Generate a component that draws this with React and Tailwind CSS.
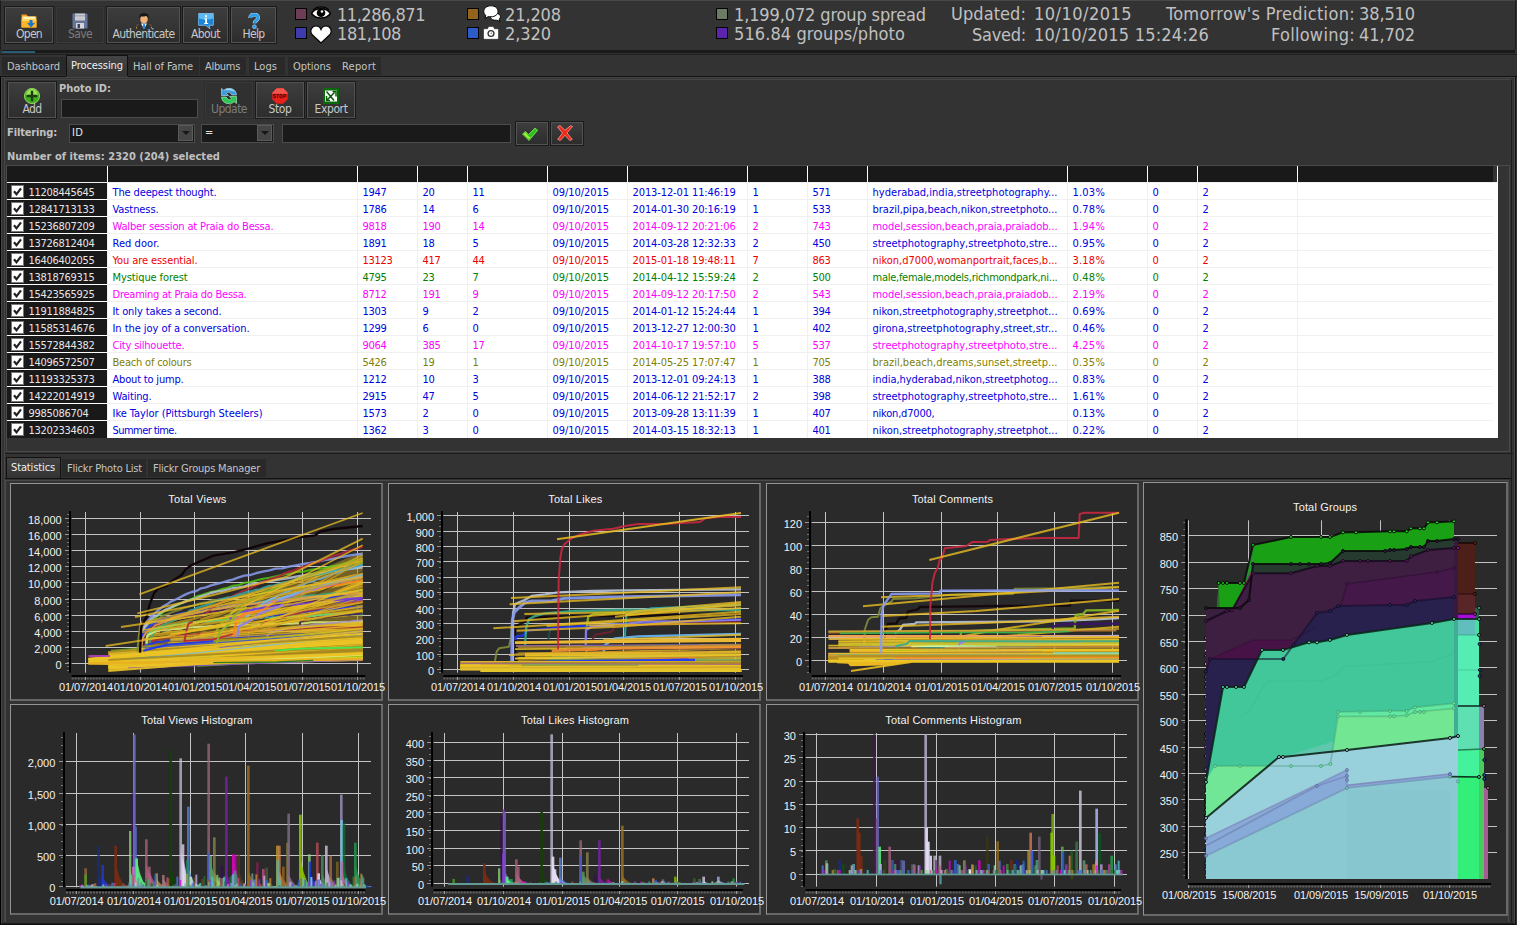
import React, { useLayoutEffect, useRef, useState } from 'react';

/* Text whose letter spacing is adjusted so that it takes a given width. */
function Fit({ w, className = '', children }) {
  const ref = useRef(null);
  const [ls, setLs] = useState(null);
  useLayoutEffect(() => {
    const nat = ref.current.getBoundingClientRect().width;
    setLs((w - nat) / String(children).length);
  }, []);
  return (
    <span ref={ref} className={'inline-block whitespace-pre ' + className} style={ls === null ? undefined : { letterSpacing: ls + 'px' }}>
      {children}
    </span>
  );
}

/* ---------- icons ---------- */
const Svg = ({ children, w = 16, h = 16, vb = '0 0 16 16' }) => (
  <svg width={w} height={h} viewBox={vb} className="block shrink-0">{children}</svg>
);
const FolderIcon = () => (
  <Svg>
    <path d="M0.5 1.5h5l1.5 2h8.5v11h-15z" fill="#f79a1c" />
    <path d="M1.5 3.5h13v3h-13z" fill="#fff3b0" />
    <path d="M0.5 6h15v8.500h-15z" fill="#fdb52c" />
    <path d="M1 6h14v2H1z" fill="#ffd560" />
    <path d="M8.500 7h3v3h2.500l-4 4.500-4-4.500h2.500z" fill="#1b77c5" />
  </Svg>
);
const SaveIcon = () => (
  <Svg>
    <path d="M0.500 0.500h14l1 1v14h-14l-1-1z" fill="#64749a" />
    <path d="M3 0.500h10v7h-10z" fill="#c9c9cf" />
    <path d="M3 2h10v1.500h-10z" fill="#a9aab4" />
    <path d="M4 10h8v5.500h-8z" fill="#d5d5d9" />
    <path d="M5.500 11h2.500v4h-2.500z" fill="#3c4660" />
  </Svg>
);
const ManIcon = () => (
  <Svg>
    <path d="M0.500 16c0-4 2-5 4-5.500h7c2 .5 4 1.500 4 5.500z" fill="#2e3136" />
    <path d="M0.500 15.500c0-3 1-4 2.500-4.500M15.500 15.500c0-3-1-4-2.500-4.500" stroke="#d98b3a" strokeWidth="1" fill="none" strokeDasharray="1.500 1.500" />
    <path d="M5 10.500h6l-3 5.500z" fill="#fff" />
    <path d="M7.300 10.500h1.500l.7 4-1.500 1.500-1.400-1.500z" fill="#2a8ae0" />
    <ellipse cx="8" cy="6" rx="3.700" ry="4.400" fill="#f1b27a" />
    <path d="M3.500 6C3 2 4 .3 8 .3S13 2 12.500 6c-.8-2-1.500-2.700-2.500-3-2 .8-4.500.5-5 .5-.7.500-1 1.500-1.500 2.500z" fill="#15171c" />
  </Svg>
);
const AboutIcon = () => (
  <Svg>
    <path d="M1 0.500h14q.8 0 .8.800v10.200q0 .8-.8.800h-4l1 3.500-4.500-3.500h-6.500q-.8 0-.8-.8V1.300q0-.8.8-.8z" fill="#1b86d8" stroke="#9cd3fa" strokeWidth=".7" />
    <path d="M1 1h14v4.500q-7 2-14 0z" fill="#5db9f3" />
    <path d="M6.500 5.200h2.500v4.800h1.200v1h-4v-1h1v-3.800h-1z M7 2.200h2v2h-2z" fill="#fff" />
  </Svg>
);
const HelpIcon = () => (
  <Svg>
    <path d="M4.200 5C4.200 2.500 5.800 1.700 8 1.700s4 1.100 4 3.200c0 2.400-3.500 2.800-3.500 5.300" fill="none" stroke="#bfe4ff" strokeWidth="3.800" />
    <path d="M4.200 5C4.200 2.500 5.800 1.700 8 1.700s4 1.100 4 3.200c0 2.400-3.500 2.800-3.500 5.300" fill="none" stroke="#2c9be8" strokeWidth="2.900" />
    <circle cx="8.400" cy="13.700" r="2" fill="#2c9be8" stroke="#bfe4ff" strokeWidth=".5" />
  </Svg>
);
const AddIcon = () => (
  <Svg>
    <circle cx="8" cy="8" r="7.600" fill="#3fae1e" stroke="#a8e66e" strokeWidth=".8" />
    <path d="M2 7a6 6 0 0 1 12 0q-6 2.500-12 0z" fill="#9be256" />
    <path d="M8 2.700v10.600M2.700 8h10.600" stroke="#1d3d12" strokeWidth="2.400" />
  </Svg>
);
const UpdateIcon = () => (
  <Svg>
    <path d="M0.500 0.500v7h7l-2.200-2.200c2-1.600 4-1.300 5.500 1.700h4.700C15 0 7-1.500 2.800 2.300z" fill="#3f9bd8" stroke="#b9e3fb" strokeWidth=".6" />
    <path d="M3 2.500C7-.8 12 .5 14 4c-3-1.500-7-2-11-1.500z" fill="#9bd6f6" />
    <path d="M15.500 15.500v-7h-7l2.200 2.200c-2 1.600-4 1.300-5.500-1.700H.5C1 16 9 17.500 13.200 13.700z" fill="#2cc757" stroke="#b4f5c0" strokeWidth=".6" />
  </Svg>
);
const StopIcon = () => (
  <Svg>
    <path d="M4.700 0.300h6.600l4.400 4.400v6.600l-4.400 4.400H4.700L.3 11.300V4.700z" fill="#e8201a" />
    <path d="M4.700 0.300h6.600l4.400 4.400v1H.3v-1z" fill="#f0564c" />
    <path d="M3.800 6.500H1.700v1.500h1.800v1.600H1.500M4.500 6.500h2.500M5.700 6.500v3.500M8 6.500h2v3.200h-2zM11.800 10V6.500h2v1.800h-2" stroke="#5d0b08" strokeWidth="1" fill="none" />
  </Svg>
);
const ExportIcon = () => (
  <Svg>
    <rect width="16" height="16" fill="#0a6a0a" />
    <rect x="2" y="2.500" width="12" height="11" fill="#fff" />
    <path d="M3.500 3.500l7.500 9M11.500 4.500l-8 8M9.500 3.500h3.500v5M3.500 8v4.500h3.500" stroke="#0a5a0a" strokeWidth="1.500" fill="none" />
  </Svg>
);
const CheckIcon = () => (
  <Svg>
    <path d="M0.500 9l3-2.500 3 3L13 3l2.700 2.300L7 15.500z" fill="#2fc41c" stroke="#8ff06e" strokeWidth=".7" />
    <path d="M1.500 9l2-1.500 3 4 2 .5L7 14z" fill="#a8f52a" />
  </Svg>
);
const CrossIcon = () => (
  <Svg>
    <path d="M0.500 2L3 .5l5 4.800L13.500.7l2 .8L10 8l5.300 6.300-2.500 1.300L8 10.300 3.300 15.500.700 14.300 5.500 8z" fill="#ee2a1c" stroke="#ffb0a4" strokeWidth=".7" />
  </Svg>
);
const EyeIcon = () => (
  <Svg w={20} h={14} vb="0 0 20 14">
    <path d="M.5 7.500C4 1.500 15 1 19.500 7.500 15 13.500 5 13.500.500 7.500z" fill="#fff" stroke="#050505" strokeWidth="1.600" />
    <circle cx="10" cy="6.800" r="4.300" fill="#050505" />
    <circle cx="11" cy="5.500" r="1.300" fill="#fff" />
    <path d="M2 4C6-.2 14-.2 18 4" stroke="#050505" strokeWidth="1.300" fill="none" />
  </Svg>
);
const HeartIcon = () => (
  <Svg w={22} h={19} vb="0 0 22 19">
    <path d="M11 18L2 9.500C-.5 6 1.500 1 5.800 1 8.500 1 10.300 2.700 11 4.500 11.700 2.700 13.500 1 16.200 1c4.300 0 6.300 5 3.800 8.500z" fill="#fff" stroke="#080808" strokeWidth="1.200" />
  </Svg>
);
const CommentsIcon = () => (
  <Svg w={18} h={17} vb="0 0 18 17">
    <path d="M9 9c3-1 7-1 8.300 1.700.5 1.700-.3 2.800-1.300 3.600l1 2.200-3.500-1.300c-3 .3-5.500-.7-6-2.700z" fill="#fff" stroke="#080808" strokeWidth="1" />
    <path d="M8 .8c4.200 0 7 2.400 7 5.500s-2.800 5.500-7 5.500c-1 0-1.800-.1-2.600-.3L2 13.500l.8-3C1.400 9.400.8 8 .8 6.300.8 3.200 3.800.8 8 .8z" fill="#fff" stroke="#080808" strokeWidth="1" />
  </Svg>
);
const CameraIcon = () => (
  <Svg w={16} h={14} vb="0 0 16 14">
    <path d="M1.500 2.800h3l1.200-2.300h4.600l1.200 2.300h3q1 0 1 1v8.500q0 1-1 1h-13q-1 0-1-1V3.800q0-1 1-1z" fill="#fff" stroke="#111" strokeWidth=".5" />
    <circle cx="8" cy="7.500" r="3.600" fill="#333" />
    <circle cx="8" cy="7.500" r="2.200" fill="#fff" />
    <circle cx="8.300" cy="7.300" r=".8" fill="#777" />
  </Svg>
);

/* ---------- small widgets ---------- */
function ToolButton({ icon, label, lw, className, disabled }) {
  return (
    <div className={'h-[38px] shrink-0 border ' + (disabled ? 'border-[#2c2c2c] ' : 'border-[#1a1a1a] ') + className}>
      <div className={'h-full flex flex-col items-center border pt-[5px] ' + (disabled ? 'border-[#383838] bg-[#303030] text-[#7c7c7c]' : 'border-[#525252] bg-linear-to-b from-[#3d3d3d] to-[#2d2d2d] text-[#c8c8c8]')}>
        {icon}
        <Fit w={lw} className="text-[12px] leading-[12px] -mt-px">{label}</Fit>
      </div>
    </div>
  );
}
const Swatch = ({ className }) => <div className={'size-[12px] border border-black ' + className} />;
const Field = ({ className, children }) => (
  <div className={'h-[19px] shrink-0 border border-[#4c4c4c] bg-[#1a1a1a] flex items-center ' + className}>{children}</div>
);
const DropArrow = () => (
  <div className="w-[15px] h-[16px] bg-[#454545] border border-[#5a5a5a] flex items-center justify-center ml-auto mr-px">
    <svg width="8" height="4" viewBox="0 0 8 4"><path d="M0 0h8L4 4z" fill="#171717" /></svg>
  </div>
);
function Tab({ label, w, className, active }) {
  return (
    <div className={'flex shrink-0 text-[11px] leading-[19px] ' + (active ? 'h-[21px] border border-b-0 border-[#111] bg-linear-to-b from-[#444] to-[#343434] text-[#f0f0f0] pl-[4px] ' : 'h-[18px] bg-[#292929] text-[#c4c4c4] pl-[5px] ') + className}>
      <Fit w={w}>{label}</Fit>
    </div>
  );
}

/* ---------- table ---------- */
const COLORS = { b: 'text-[#0000e0]', m: 'text-[#ff00ff]', r: 'text-[#ee0000]', g: 'text-[#008000]', o: 'text-[#808000]' };
const ROWS = [
  ['b', '11208445645', 'The deepest thought.', 104, '1947', '20', '11', '2013-12-01 11:46:19', '1', '571', 'hyderabad,india,streetphotography...', '1.03%'],
  ['b', '12841713133', 'Vastness.', 46, '1786', '14', '6', '2014-01-30 20:16:19', '1', '533', 'brazil,pipa,beach,nikon,streetphoto...', '0.78%'],
  ['m', '15236807209', 'Walber session at Praia do Bessa.', 161, '9818', '190', '14', '2014-09-12 20:21:06', '2', '743', 'model,session,beach,praia,praiadob...', '1.94%'],
  ['b', '13726812404', 'Red door.', 47, '1891', '18', '5', '2014-03-28 12:32:33', '2', '450', 'streetphotography,streetphoto,stre...', '0.95%'],
  ['r', '16406402055', 'You are essential.', 85, '13123', '417', '44', '2015-01-18 19:48:11', '7', '863', 'nikon,d7000,womanportrait,faces,b...', '3.18%'],
  ['g', '13818769315', 'Mystique forest', 75, '4795', '23', '7', '2014-04-12 15:59:24', '2', '500', 'male,female,models,richmondpark,ni...', '0.48%'],
  ['m', '15423565925', 'Dreaming at Praia do Bessa.', 134, '8712', '191', '9', '2014-09-12 20:17:50', '2', '543', 'model,session,beach,praia,praiadob...', '2.19%'],
  ['b', '11911884825', 'It only takes a second.', 109, '1303', '9', '2', '2014-01-12 15:24:44', '1', '394', 'nikon,streetphotography,streetphot...', '0.69%'],
  ['b', '11585314676', 'In the joy of a conversation.', 137, '1299', '6', '0', '2013-12-27 12:00:30', '1', '402', 'girona,streetphotography,street,str...', '0.46%'],
  ['m', '15572844382', 'City silhouette.', 72, '9064', '385', '17', '2014-10-17 19:57:10', '5', '537', 'streetphotography,streetphoto,stre...', '4.25%'],
  ['o', '14096572507', 'Beach of colours', 79, '5426', '19', '1', '2014-05-25 17:07:47', '1', '705', 'brazil,beach,dreams,sunset,streetp...', '0.35%'],
  ['b', '11193325373', 'About to jump.', 71, '1212', '10', '3', '2013-12-01 09:24:13', '1', '388', 'india,hyderabad,nikon,streetphotog...', '0.83%'],
  ['b', '14222014919', 'Waiting.', 39, '2915', '47', '5', '2014-06-12 21:52:17', '2', '398', 'streetphotography,streetphoto,stre...', '1.61%'],
  ['b', '9985086704', 'Ike Taylor (Pittsburgh Steelers)', 150, '1573', '2', '0', '2013-09-28 13:11:39', '1', '407', 'nikon,d7000,', '0.13%'],
  ['b', '13202334603', 'Summer time.', 64, '1362', '3', '0', '2014-03-15 18:32:13', '1', '401', 'nikon,streetphotography,streetphot...', '0.22%'],
];
const COLW = ['w-[250px]', 'w-[60px]', 'w-[50px]', 'w-[80px]', 'w-[80px]', 'w-[120px]', 'w-[60px]', 'w-[60px]', 'w-[200px]', 'w-[80px]', 'w-[50px]', 'w-[100px]', 'w-[196px]'];
const digits = (s) => [...s].reduce((a, c) => a + (c === ' ' || c === ':' ? 3.7 : c === '-' ? 4 : c === '/' ? 4.3 : c === '%' ? 10.500 : c === '.' ? 4 : 6), 0);

function Table() {
  return (
    <div className="w-[1491px] text-[11px]">
      <div className="flex h-[16px] bg-[#191919]">
        <div className="w-[100px]" />
        {COLW.map((c, i) => <div key={i} className={c + ' border-l border-white shrink-0'} />)}
        <div className="w-[4px] bg-[#333]" />
        <div className="w-px bg-white" />
      </div>
      <div className="h-px bg-[#f0f0f0]" />
      {ROWS.map((r, n) => {
        const last = n === ROWS.length - 1;
        const cells = [r[2], r[4], r[5], r[6], '09/10/2015', r[7], r[8], r[9], r[10], r[11], '0', '2', ''];
        const tagW = r[10].length < 20 ? 62 : 185;
        return (
          <div key={n} className="flex h-[17px] bg-white">
            <div className={'w-[100px] shrink-0 bg-[#191919] flex pl-[4px] pt-[2px] text-[#e6e6e6] ' + (last ? '' : 'border-b border-white')}>
              <svg width="13" height="13" viewBox="0 0 13 13" className="block shrink-0">
                <rect x=".5" y=".5" width="12" height="12" fill="#fff" stroke="#777" />
                <path d="M3 6.300l2.500 3L10 3.300" fill="none" stroke="#222" strokeWidth="2.200" />
              </svg>
              <Fit w={r[1].length * 6} className="ml-[4.500px] leading-[16px]">{r[1]}</Fit>
            </div>
            {cells.map((c, i) => (
              <div key={i} className={COLW[i] + ' shrink-0 border-l border-[#f0f0f0] pl-[4.500px] leading-[20px] h-[17px] ' + COLORS[r[0]] + (last ? '' : ' border-b')}>
                {c && <Fit w={i === 0 ? r[3] : i === 8 ? tagW : digits(c)}>{c}</Fit>}
              </div>
            ))}
          </div>
        );
      })}
    </div>
  );
}

/* ---------- charts ---------- */
/* Chart geometry is kept at three units to the pixel, from an origin ox, oy. */
const snap = (z) => Math.floor(z / 3) + 0.5;
const DATES = ['01/07/2014', '01/10/2014', '01/01/2015', '01/04/2015', '01/07/2015', '01/10/2015'];
const GOLD = '#e9bd22';
const PAL = ['#8a9cf0', '#4fc80f', '#b9c4d8', '#7f8a3a', '#1a32ff', '#37a88a', '#3c1458', '#f0a050', '#55d880', '#d8f080', '#ff8020', '#9080f0', '#b02838', '#6ab8f8', '#a890b8', '#6a3ae0', '#88b820', '#30a8a8'];
const HPAL = ['#e000e0', '#58a078', '#3068e0', '#88d870', '#c89030', '#a06030', '#8040c0', '#d0b8e8', '#a0e0c0', '#605020', '#207030', '#c05078', '#50c8d8', '#5878e8', '#7a9ea0'];

function rng(seed) {
  let a = seed;
  return () => {
    a = (a + 0x6d2b79f5) | 0;
    let t = Math.imul(a ^ (a >>> 15), 1 | a);
    t = (t + Math.imul(t ^ (t >>> 7), 61 | t)) ^ t;
    return ((t ^ (t >>> 14)) >>> 0) / 4294967296;
  };
}

function Chart({ x, y, w, h, ox, oy, title, tx, ty, tw, xs, ys, left, right, top, bottom, ax, ay, axEnd, lx, ylx, labelY, dates = DATES, minor = 3, className, children }) {
  const step = (ys[1][1] - ys[0][1]) / minor;
  const minors = [];
  for (let v = ys[0][1] - step; v > top; v -= step) minors.push(v);
  for (let v = ys[0][1] + step; v < bottom; v += step) minors.push(v);
  return (
    <div className={'shrink-0 bg-[#2a2a2a] border-l border-t border-r-2 border-b-2 border-l-[#949494] border-t-[#949494] border-r-[#686868] border-b-[#686868] ' + className}>
      <svg width={w - 3} height={h - 3} viewBox={`${x + 1 - ox} ${y + 1 - oy} ${w - 3} ${h - 3}`} className="block overflow-visible">
        {ys.map(([, v], i) => <line key={i} x1={left / 3} x2={right / 3} y1={snap(v)} y2={snap(v)} stroke="#c3c3c3" />)}
        {xs.map((v, i) => <line key={i} y1={top / 3} y2={bottom / 3} x1={snap(v)} x2={snap(v)} stroke="#c3c3c3" />)}
        {minors.map((v, i) => <line key={i} x1={ax / 3 - 3} x2={ax / 3 - 1} y1={snap(v)} y2={snap(v)} stroke="#777" />)}
        {ys.map(([, v], i) => <line key={i} x1={ax / 3 - 5} x2={ax / 3 - 1} y1={snap(v)} y2={snap(v)} stroke="#999" />)}
        <line x1={ax / 3} x2={ax / 3} y1={top / 3 - 1} y2={bottom / 3} stroke="#000" strokeWidth="2" />
        <line x1={left / 3} x2={axEnd / 3} y1={ay / 3} y2={ay / 3} stroke="#000" strokeWidth="2" />
        <line x1={left / 3} x2={axEnd / 3} y1={ay / 3 + 2.500} y2={ay / 3 + 2.500} stroke="#636363" strokeWidth="2" strokeDasharray="2 1" />
        {xs.map((v, i) => <line key={i} y1={ay / 3 + 1} y2={ay / 3 + 4} x1={snap(v)} x2={snap(v)} stroke="#999" />)}
        <g transform="scale(0.333333)">{children}</g>
        <g fill="#f2f2f2" fontSize="11" fontFamily='"Liberation Sans", Arial, sans-serif'>
          <text x={tx / 3} y={ty / 3} textLength={tw}>{title}</text>
          {ys.map(([l, v], i) => <text key={i} x={ylx / 3} y={v / 3 + 5.300} textAnchor="end">{l}</text>)}
          {dates.map((l, i) => <text key={i} x={lx[i] / 3} y={labelY / 3} textLength="54">{l}</text>)}
        </g>
      </svg>
    </div>
  );
}

const P = ({ d, c, o = 0.900, w = 6 }) => <polyline points={d} fill="none" stroke={c} strokeOpacity={o} strokeWidth={w} strokeLinejoin="round" />;

function growth(r, x0, y0, x1, y1, p) {
  const pts = [];
  let prev = y0;
  const n = 45;
  for (let i = 0; i <= n; i++) {
    const t = i / n;
    const tt = Math.pow(t, 1.6);
    let v = y0 + (y1 - y0) * Math.pow(tt, p) + (r() - 0.5) * 3;
    if (i === n) v = y1;
    v = Math.min(prev, v);
    prev = v;
    pts.push((x0 + (x1 - x0) * tt).toFixed(0) + ',' + v.toFixed(0));
  }
  return pts.join(' ');
}

function ViewsLines() {
  const r = rng(11);
  const out = [];
  const over = [];
  const curves = [
    [421, 515, 222, .34, '#8a9cf0'], [423, 515, 245, .36, '#4fc80f'], [421, 512, 262, .33, '#b9c4d8'], [424, 515, 300, .3, '#7f8a3a'],
    [424, 515, 345, .24, '#1a32ff'], [450, 505, 332, .33, '#37a88a'], [430, 515, 355, .25, '#3c1458'], [424, 515, 338, .3, '#f0a050'],
    [440, 500, 402, .2, '#55d880'], [440, 490, 425, .2, '#d8f080'], [455, 490, 440, .4, '#b02838'], [430, 510, 458, .3, '#1a32ff'],
    [645, 480, 235, .5, '#88b820'], [700, 470, 300, .4, '#ff8020'], [650, 490, 290, .5, '#9080f0'], [710, 470, 255, .5, '#6ab8f8'],
    [620, 400, 200, .75, '#b02838'], [780, 400, 285, .6, '#6ab8f8'], [690, 430, 360, .3, '#6a3ae0'], [900, 435, 402, .3, '#3c1458'],
    [760, 420, 380, .6, '#1a32ff'], [800, 470, 420, .5, '#a890b8'], [560, 400, 252, .8, '#30a8a8'], [780, 440, 365, .6, '#b02838'],
  ];
  /* broad translucent wash under the dense fan of trend lines */
  out.push(<polygon key="w1" points="421,455 620,400 860,310 1088,215 1088,470 421,520" fill="#b08e20" fillOpacity=".55" />);
  out.push(<polygon key="w2" points="325,515 421,505 800,470 1088,420 1088,543 640,552 325,573" fill="#e6c02a" fillOpacity=".9" />);
  out.push(<polygon key="w3" points="265,533 330,530 330,555 265,553" fill="#e6c02a" />);
  for (let i = 0; i < 34; i++) {
    const f = r();
    const x0 = 421 + Math.floor(r() * 5) * (r() < 0.3 ? 0 : 82);
    const t = (x0 - 421) / 667;
    const y1 = 200 + f * 265;
    const y0 = Math.min(510, 410 + f * 80 + t * 25 * r());
    out.push(<line key={'g' + i} x1={x0} y1={y0} x2={1088} y2={y1} stroke={i % 3 ? '#d6ac22' : '#a8861f'} strokeOpacity=".85" strokeWidth="5" />);
  }
  for (let i = 0; i < 12; i++) {
    const f = r();
    const x0 = 480 + Math.floor(r() * 6) * 70;
    out.push(<line key={'n' + i} x1={x0} y1={455 - (x0 - 480) * 0.1 + f * 30} x2={1088} y2={240 + f * 220} stroke="#3a3420" strokeOpacity=".7" strokeWidth="4" />);
  }
  curves.forEach(([x0, y0, y1, p, c], i) => over.push(<P key={'c' + i} d={growth(r, x0, y0, 1088, y1, p)} c={c} w={i % 2 ? 6 : 7} o={0.85} />));
  for (let i = 0; i < 26; i++) {
    const f = r();
    const x0 = 421 + Math.floor(r() * 5) * 90;
    over.push(<line key={'h' + i} x1={x0} y1={400 + f * 90} x2={1088} y2={195 + f * 270} stroke={i % 2 ? GOLD : '#cda224'} strokeOpacity=".8" strokeWidth="4.500" />);
  }
  for (let i = 0; i < 58; i++) {
    const f = r();
    const x0 = [325, 325, 421, 421, 265, 540, 640][Math.floor(r() * 7)];
    const early = x0 === 265;
    const y0 = early ? 535 + f * 17 : 505 + f * 60 - (x0 > 325 ? 10 : 0);
    const y1 = 440 + f * 100;
    const hue = i % 4 === 2;
    over.push(<line key={'b' + i} x1={hue ? x0 + r() * 400 : x0} y1={y0} x2={1088} y2={y1} stroke={hue ? PAL[Math.floor(r() * PAL.length)] : i % 4 === 3 ? '#a8881f' : '#ecc424'} strokeOpacity={hue ? 0.7 : 0.85} strokeWidth={hue ? 4 : 6} />);
  }
  return (
    <g>
      {out}
      {over}
      <P d="265,528 330,528" c="#b040c0" />
      <P d="265,550 640,545 1088,537" c="#e8b020" w={8} />
      <P d="325,573 640,548" c={GOLD} w={6} />
      <P d="640,548 830,546 940,541" c="#207820" w={4} />
      <P d="825,512 900,506 1088,502" c="#40f050" w={5} />
      <P d="553,485 560,450 566,430 578,426" c="#b02838" />
      <P d="553,483 640,478 700,462" c="#c02030" w={5} />
      <P d="430,512 500,494 640,484" c="#1a32ff" />
      <P d="650,490 660,455 690,430 705,405 740,380" c="#88b820" />
      <P d="700,470 710,420 730,402 790,390 830,360" c="#ff8020" />
      <P d="712,470 716,440 745,425 780,400 850,375" c="#9080f0" w={7} />
      <P d="1000,360 1088,354" c="#6a3ae0" w={7} />
      <P d="412,515 416,470 421,430" c="#7f8a3a" />
      <P d="420,518 424,440 440,410 450,370 462,340 475,325 500,318 518,302 545,285 557,268 575,255 610,240 640,227 700,217 745,206 800,190 850,181 890,173 945,166 960,155 1000,147 1088,138" c="#120509" o={1} w={7} />
      <P d="418,343 1088,99" c={GOLD} o={0.75} w={5.500} />
      <P d="412,400 640,345 860,290 1088,176" c={GOLD} o={0.750} w={5.500} />
      <P d="405,411 640,365 1088,290" c={GOLD} o={0.750} w={5.500} />
      <P d="363,441 640,400 1088,330" c={GOLD} o={0.750} w={5.500} />
      <P d="317,498 500,470 1088,340" c={GOLD} o={0.750} w={5.500} />
    </g>
  );
}

function flatLines(r, n, x0s, ya, yb, rise) {
  const out = [];
  for (let i = 0; i < n; i++) {
    const y0 = ya + (yb - ya) * r();
    const hue = i % 2 === 1;
    const x0 = x0s[Math.floor(r() * x0s.length)] + (hue ? r() * 250 : 0);
    const c = hue ? PAL[Math.floor(r() * PAL.length)] : i % 4 === 2 ? '#b08a24' : '#ecc424';
    out.push(<line key={ya + '-' + i} x1={x0} y1={y0} x2={hue && r() < 0.5 ? x0 + 350 : 1068} y2={y0 - rise * r()} stroke={c} strokeOpacity={hue ? 0.7 : 0.85} strokeWidth={hue ? 3.500 : 5} />);
  }
  return out;
}

function LikesLines() {
  const r = rng(5);
  const T = (d, i) => <P key={i} d={d} c={GOLD} o={0.780} w={6} />;
  return (
    <g>
      <P d="330,543 335,515 342,505 372,500 378,470 380,440 386,400" c="#7f8a3a" />
      <P d="390,548 390,440 405,432 420,426 425,412 520,410 640,408 900,405 1068,402" c="#120509" w={7} />
      <P d="392,480 392,470 415,466 425,452 520,443 600,438 1068,418" c="#1a32ff" w={7} />
      <P d="420,495 424,440 432,418 450,408 480,400 570,393 700,390 1068,390" c="#37a88a" w={7} />
      <P d="384,548 384,400 390,372 415,362 440,348 480,343 520,337 620,333 720,331 1068,328" c="#b9c4d8" w={7} />
      <P d="380,552 382,420 388,397 400,385 420,368 440,363 500,362 540,355 650,352 1068,344" c="#8a9cf0" w={9} />
      <P d="602,500 603,450 620,440 700,435 780,424 960,425 1068,420" c="#9080f0" w={7} />
      <P d="605,440 610,410 625,402 720,398" c="#88b820" w={7} />
      <P d="623,478 630,464 680,455 690,438 1068,425" c="#702030" />
      <P d="720,468 724,403 800,385 1068,374" c="#30a8a8" />
      <P d="655,520 660,495 690,475 760,469 1068,462" c="#6ab8f8" w={7} />
      <P d="602,535 605,510 640,508" c="#ff8020" />
      <P d="490,478 495,450" c="#205050" />
      {['378,354 1068,322', '374,373 1068,337', '418,402 720,396 1068,366', '384,424 1068,376', '325,445 640,425 1068,395', '395,452 700,440 1068,410', '485,438 1068,402', '610,436 1068,430', '690,410 1068,370', '720,405 1068,384', '372,525 800,512 1068,505', '655,480 1068,464'].map(T)}
      <polygon points="390,484 1068,473 1068,486 390,492" fill="#eab834" />
      <polygon points="392,496 1068,491 1068,496 392,500" fill="#a070a0" />
      {flatLines(r, 24, [390, 400, 420, 540], 498, 535, 8)}
      <P d="500,512 700,505 1068,500" c="#f09030" w={9} />
      <P d="420,522 700,520 1068,516" c="#e8b828" w={8} />
      {flatLines(r, 12, [390, 400, 420], 535, 552, 12)}
      <P d="382,548 500,545 640,543 930,540" c="#1a32ff" w={7} />
      <rect x="226" y="543" width="842" height="29" fill="#dcb232" />
      {flatLines(r, 34, [226, 226, 226, 286], 546, 570, 3)}
      <P d="226,550 500,551 1068,553" c="#a06880" w={4} />
      <rect x="226" y="562" width="842" height="8" fill="#e0be2c" />
      <rect x="286" y="568" width="784" height="8" fill="#e4c62a" />
      <P d="519,508 521,300 526,235 530,210 538,193 553,180 580,165 625,152 685,146 720,138 760,132 850,131 945,126 960,115 1000,111 1068,111" c="#c82840" />
      <P d="516,178 1068,99" c={GOLD} o={0.850} />
    </g>
  );
}

function CommentLines() {
  const r = rng(21);
  return (
    <g>
      <P d="303,515 305,450 315,420 325,412 345,410 352,385 365,375 385,365 390,357 460,355 560,344 750,342 755,326 915,325 1068,320" c="#7f8a3a" />
      <P d="362,520 368,450 375,432 400,430 408,416 430,414 435,395 465,388 470,381 560,380 700,378 920,377 925,362 1068,362" c="#120509" w={7} />
      <P d="395,460 410,450 420,435 455,432 460,427 640,426 850,424 1000,418 1068,414" c="#b9c4d8" w={7} />
      <P d="590,480 595,455 700,450 935,445 938,405 960,402 970,391 1068,390" c="#88b820" w={7} />
      <P d="865,500 870,440 900,432 1068,431" c="#3c1468" w={7} />
      {['300,379 920,322 1068,308', '354,352 760,338 1068,322', '358,408 640,393 1068,357', '355,440 640,430 1068,410', '590,470 700,450 1068,392', '420,490 700,470 1068,440'].map((d, i) => <P key={i} d={d} c={GOLD} o={0.8} />)}
      <P d="196,458 460,454 1060,452" c="#b87830" w={5} />
      <P d="230,460 590,457 780,458 920,454" c="#38b850" w={5} />
      <P d="196,454 620,452 1068,447" c="#d0a830" w={5} />
      <rect x="196" y="465" width="872" height="7" fill="#f0a050" />
      <P d="200,477 440,474 800,471 1068,466" c="#b9a8d8" w={4} />
      {flatLines(r, 26, [196, 226, 226, 260, 400, 600], 474, 502, 6)}
      <P d="196,477 1068,471" c="#ecc424" w={5} />
      <P d="226,494 1068,490" c="#c8c030" w={6} />
      <P d="398,522 400,498 430,492 440,483 1068,484" c="#37a88a" />
      <P d="585,518 590,490 605,486" c="#9080f0" />
      <P d="445,500 520,498 700,500" c="#d8f8a0" w={5} />
      <P d="196,504 360,504" c="#d09a40" w={6} />
      <rect x="260" y="507" width="808" height="11" fill="#eab22c" />
      {flatLines(r, 10, [260, 360, 370], 502, 520, 5)}
      <rect x="196" y="519" width="872" height="28" fill="#d4aa34" />
      <P d="196,522 440,522 800,521" c="#a85880" w={5} />
      {flatLines(r, 30, [196, 196, 226], 521, 544, 2)}
      <rect x="196" y="539" width="872" height="9" fill="#ecc622" />
      <polygon points="222,546 440,546 390,556 262,559 255,551 222,550" fill="#ecb822" />
      <P d="264,573 445,546" c={GOLD} />
      <P d="870,519 1068,519" c="#70e0d0" w={5} />
      <P d="354,520 356,400 362,375 380,350 385,342 530,340 532,332 1068,331" c="#8a9cf0" w={7} />
      <P d="501,478 502,380 508,310 515,280 525,262 530,240 537,235 545,205 560,203 610,198 628,186 675,185 680,180 740,177 840,174 947,174 950,102 965,98 1068,98" c="#c82840" />
      <P d="499,240 1068,98" c={GOLD} o={0.8} />
    </g>
  );
}

function Spikes({ list, base, seed, from, to, amp, unit }) {
  const r = rng(seed);
  const noise = [];
  for (let x = from; x < to; x += 3) {
    const late = x > 390 ? 1 : 0.35;
    let hgt = Math.pow(r(), 2.4) * amp * late;
    if (unit) hgt = r() < 0.34 * (late + 0.2) ? unit * Math.ceil(Math.pow(r(), 4) * 2.500) : 0;
    if (hgt > 1) noise.push(<rect key={x} x={x - 3} y={base - hgt} width={6} height={hgt} fill={HPAL[Math.floor(r() * HPAL.length)]} fillOpacity=".75" />);
  }
  return (
    <g>
      {list.map(([x, top, c, tail, o], i) => (
        <g key={i} fill={c} fillOpacity={o || 0.75}>
          <rect x={x - 4} y={top} width="8" height={base - top} />
          {tail ? <polygon points={`${x},${base} ${x},${base - tail} ${x + 10},${base - tail * 0.5} ${x + 20},${base - tail * 0.2} ${x + 42},${base}`} /> : null}
        </g>
      ))}
      {noise}
      <rect x={from} y={base - 3} width={to - from} height={unit ? 5 : 6} fill="#649a94" />
    </g>
  );
}
const VIEW_SPIKES = [
  [257, 505, '#a06a40'], [257, 523, '#50a020'], [296, 437, '#1a2c80', 40], [308, 495, '#2038e0', 30], [347, 437, '#7a2c14', 70, 0.9], [391, 393, '#90d870', 50], [398, 280, '#3a1260', 60], [403, 104, '#6a6ac8', 100, 0.9], [407, 380, '#5868c0', 60],
  [410, 475, '#58f080', 85, 0.9], [400, 500, '#d878c8', 40], [439, 418, '#b06080', 70], [448, 500, '#b06080', 50], [470, 520, '#b8a060', 25], [490, 525, '#b08080', 25], [512, 150, '#144008', 60, 0.9], [542, 175, '#c8c0dc', 120], [549, 433, '#e4dcf4', 90], [565, 320, '#5888e0', 60], [562, 480, '#208868', 50],
  [572, 530, '#d8d0f0', 30], [626, 131, '#a06878'], [626, 458, '#4058d8', 60], [632, 468, '#58a060', 75, 0.9], [643, 412, '#908850', 50], [666, 497, '#301050', 40], [679, 230, '#8020b0', 40], [700, 463, '#e000c0', 90, 0.9], [706, 465, '#b010a0', 60], [705, 512, '#409878', 50], [716, 462, '#484018', 50], [745, 197, '#98701c', 50, 0.85],
  [772, 487, '#802050', 20], [790, 507, '#c05090', 25], [800, 503, '#506030', 25], [832, 437, '#c8a020', 50], [838, 437, '#d88850', 50], [833, 480, '#58b0a0', 40], [850, 500, '#a06820', 25], [862, 428, '#807040', 40], [866, 341, '#8a7290', 40], [901, 344, '#88c000', 90, 0.9], [928, 463, '#90d880', 40], [930, 485, '#1020e0', 50], [952, 428, '#c05058', 40], [956, 520, '#e0d8f0', 30, 0.9],
  [967, 465, '#509060', 40], [979, 437, '#c0b0d0', 60, 0.9], [992, 467, '#b07040', 30], [1012, 485, '#806820', 30], [1024, 284, '#a898c8', 60], [1025, 360, '#70c8e8', 50], [1032, 370, '#10702c', 60], [1026, 485, '#c060a0', 40], [1066, 428, '#209048', 70, 0.9], [1085, 538, '#2040c0', 20],
];
const LIKE_SPIKES = [
  [206, 537, '#50a020'], [248, 527, '#1a2c80'], [298, 490, '#7a2c14', 40, 0.9], [343, 505, '#90d870', 15], [350, 348, '#2c1048'], [356, 328, '#6a2c78', 30], [359, 335, '#6a6ac8', 40], [355, 460, '#8040d0', 30], [366, 530, '#58f080', 15, 0.9], [379, 537, '#20b050'], [394, 478, '#b06080', 35], [400, 500, '#b06080', 20], [470, 336, '#144008', 30, 0.9],
  [500, 103, '#c8c0dc', 80], [504, 470, '#e4dcf4', 55, 0.9], [510, 508, '#e4dcf4', 30, 0.9], [526, 473, '#5888e0', 20], [587, 421, '#a06878', 20], [587, 467, '#4058d8', 35], [595, 515, '#58a060', 30], [607, 457, '#908850', 20], [630, 527, '#301050', 10], [643, 421, '#8020b0', 20], [668, 538, '#b010a0', 15], [712, 377, '#98701c', 25, 0.85],
  [805, 535, '#d88850', 10], [812, 540, '#2060e0', 8], [834, 538, '#8a7290', 8], [871, 530, '#88c000', 12], [928, 535, '#306820', 8], [944, 537, '#507850', 8], [956, 530, '#e0d8f0', 8], [1000, 530, '#a8b8f0', 12], [1046, 535, '#209048', 8],
];
const COMMENT_SPIKES = [
  [190, 481, '#50a060'], [192, 490, '#a8c8b0'], [230, 481, '#1a2c80'], [241, 493, '#145014'], [215, 508, '#208820'], [272, 492, '#58b8c0'], [284, 355, '#7a2c14', 0, 0.9], [289, 398, '#7a2c14', 0, 0.9], [295, 467, '#7a2c14'], [294, 507, '#d09020'], [334, 103, '#401850', 0, 0.8], [341, 355, '#702038'], [344, 230, '#6a6ac8'], [350, 440, '#58f080', 0, 0.85], [353, 492, '#c0a0e0'],
  [366, 480, '#304020'], [380, 440, '#b06080'], [388, 480, '#4060c0'], [398, 492, '#50c8a0'], [402, 481, '#401040'], [416, 480, '#4858a0'], [422, 482, '#7078c0'], [448, 493, '#706030'], [453, 493, '#5080d0'], [488, 103, '#aea6c0', 0, 0.9], [491, 383, '#e4dcf4', 0, 0.9], [496, 425, '#e4dcf4', 0, 0.95], [503, 467, '#e4dcf4', 0, 0.9], [515, 467, '#c8c0dc'], [531, 467, '#c8c0dc'], [520, 480, '#603070'], [550, 508, '#8088d0'],
  [577, 480, '#3068e0'], [585, 492, '#4878d0'], [604, 481, '#a09060'], [620, 508, '#f0e8f8', 0, 0.95], [628, 493, '#a09060'], [649, 481, '#b010a0', 0, 0.95], [673, 410, '#3a3810'], [677, 492, '#3068e0'], [704, 424, '#98701c'], [733, 492, '#409040'], [745, 481, '#702c14'], [755, 492, '#4080a0'], [763, 481, '#1820a0'], [780, 493, '#6088e0'], [797, 452, '#b8a020'], [803, 398, '#c07050', 0, 0.9], [807, 452, '#3060e0', 0, 0.9],
  [822, 480, '#40b880'], [829, 410, '#786480'], [869, 342, '#70a800', 0, 0.9], [866, 398, '#88c800', 0, 0.9], [873, 467, '#88c800', 0, 0.9], [898, 440, '#70b850'], [900, 455, '#2050d0'], [910, 493, '#9040b0'], [921, 467, '#d06840', 0, 0.9], [926, 452, '#206020'], [941, 425, '#407850'], [952, 272, '#c8c0d4', 0, 0.85], [963, 481, '#60a880'], [970, 493, '#d06860'], [992, 493, '#b89020'], [1001, 326, '#a0a8e0', 0, 0.95], [1000, 482, '#e080b0'], [1010, 398, '#0c5020', 0, 0.9], [1015, 493, '#c0a0e0'], [1039, 493, '#d040a0'], [1046, 467, '#209848', 0, 0.9], [1057, 493, '#7090d0'],
];

const SERIES = [
  '236,309 249,309 261,309 300,309 312,309 339,195 453,171 543,171 570,171 609,157 648,157 750,154 762,154 800,154 813,145 840,145 852,145 864,127 891,127 942,124',
  '198,384 300,384 327,360 339,252 453,252 480,252 507,252 543,252 570,249 609,213 735,213 750,210 762,210 800,207 813,201 840,201 852,201 864,183 891,183 942,177 954,177',
  '198,423 261,393 276,391 339,280 453,280 531,258 570,258 609,243 660,243 684,243 750,243 800,243 813,229 864,210 942,204 954,204',
  '198,575 210,537 430,537 460,495 531,399 570,393 594,378 750,375 800,375 825,363 942,351',
  '198,906 249,621 261,621 288,621 312,621 366,510 429,510 507,487 531,487 570,480 621,465 876,429 942,417 1017,417',
];
function Dots({ p, c, dark = '#0a0a0a', o = 1 }) {
  return p.split(' ').map((s, i) => {
    const [a, b] = s.split(',').map(Number);
    return <circle key={i} cx={a} cy={b} r="4.500" fill={c} stroke={dark} strokeWidth="3" opacity={o} />;
  });
}
const Poly = ({ p, c, o = 1 }) => <polygon points={p} fill={c} fillOpacity={o} />;
function GroupAreas() {
  const [green, black, purple, navy, teal] = SERIES;
  const leftDots = [474, 512, 527, 552, 576, 591, 605, 621, 651, 688, 704, 732, 762, 776, 800, 828, 868, 893, 920, 940, 960, 975, 990, 1008, 1028, 1040, 1060, 1090, 1112, 1150, 1168, 1186];
  const dc = ['#50a080', '#c8c8e0', '#b020c0', '#a0e0d0', '#2050a0', '#308060', '#c040c0', '#907050'];
  return (
    <g>
      {leftDots.map((v, i) => <circle key={v} cx="197" cy={v} r="4" fill={dc[i % 8]} stroke="#080808" strokeWidth="3" />)}
      <Poly p={green + ' 942,260 230,400'} c="#1aa014" />
      <Poly p="230,384 236,309 240,400" c="#2c6a28" />
      <Poly p={'327,384 ' + black.split(' ').slice(3).join(' ') + ' 954,420'} c="#263a30" />
      <Poly p="312,309 339,195 339,270" c="#259430" />
      <Poly p="198,384 300,384 327,360 339,280 339,520 198,520" c="#38203e" />
      <Poly p="276,391 335,270 330,352 302,385" c="#7a2c60" />
      <Poly p={purple + ' 954,1190 198,1190'} c="#3e1e41" />
      <Poly p="453,480 507,455 600,400 621,312 891,276 942,264 942,540 430,540" c="#44194a" />
      <Poly p="210,537 339,480 453,480 430,540" c="#471245" />
      <Poly p={navy + ' 942,1190 198,1190'} c="#28204d" />
      <rect x="942" y="177" width="12" height="240" fill="#381a40" />
      <rect x="954" y="189" width="51" height="213" fill="#4c1f19" />
      <rect x="954" y="342" width="51" height="60" fill="#5a2526" />
      <rect x="954" y="402" width="51" height="15" fill="#a80cd8" />
      <rect x="1005" y="384" width="12" height="33" fill="#286048" />
      <Poly p={'198,1197 ' + teal + ' 1017,1197'} c="#41c79a" />
      <rect x="942" y="417" width="12" height="360" fill="#3fae94" />
      <rect x="954" y="417" width="51" height="48" fill="#60bfbd" />
      <rect x="1005" y="417" width="12" height="48" fill="#48e0a0" />
      <rect x="954" y="465" width="63" height="213" fill="#56edb4" />
      <rect x="954" y="678" width="63" height="132" fill="#5fe0b2" />
      <rect x="954" y="810" width="63" height="80" fill="#45f29c" />
      <rect x="954" y="890" width="63" height="307" fill="#31ef79" />
      <rect x="1017" y="678" width="15" height="130" fill="#8c80b0" />
      <rect x="1017" y="808" width="15" height="389" fill="#4bcb5e" />
      <rect x="1032" y="924" width="12" height="273" fill="#a45c92" />
      <Poly p="429,858 580,782 575,855" c="#5fc8ac" />
      <Poly p="198,1014 198,900 225,858 545,858 571,852 577,815 417,831" c="#72e697" />
      <Poly p="430,831 577,785 577,850 380,858" c="#5fc8ac" />
      <Poly p="571,852 594,696 750,693 800,693 825,682 942,670 942,790 571,830" c="#62e8a0" />
      <Poly p="577,835 594,709 750,709 800,706 825,696 942,685 942,790" c="#72e693" />
      <P d="300,712 330,690 380,604 543,602 580,590 610,560 876,545 942,520" c="#2f9d7a" o={0.12} w={4} />
      <P d="954,465 1017,465" c="#3a9a80" o={0.5} w={4} />
      <P d="954,570 1017,570" c="#3a9a80" o={0.3} w={4} />
      <Poly p="198,1014 417,831 429,831 621,810 930,774 954,768 954,1197 198,1197" c="#98d0db" />
      <Poly p="198,1127 621,924 930,892 954,890 954,1197 198,1197" c="#8ac8d2" />
      <Poly p="198,1075 621,870 621,916 930,882 930,892 621,924 198,1127" c="#87aad9" />
      <P d="198,1075 621,870 621,924" c="#8088b8" o={0.7} w={5} />
      <P d="198,1097 531,918 621,888" c="#7484b4" o={0.700} w={5} />
      <P d="198,1127 621,924 930,890" c="#7496b8" o={0.8} w={5} />
      <P d="621,916 930,882" c="#8088b8" w={5} />
      <rect x="621" y="930" width="309" height="267" fill="#88c6cf" />
      <P d={green} c="#080808" o={0.850} w={6} />
      <P d={black} c="#080808" o={0.850} w={6} />
      <P d={purple} c="#14081a" o={0.8} w={6} />
      <P d={navy} c="#140c28" o={0.55} w={6} />
      <P d="210,537 339,480 453,480 531,440" c="#2c0c30" o={0.3} w={5} />
      <P d="600,385 621,312 891,276 942,264" c="#2c0c30" o={0.5} w={5} />
      <P d={teal} c="#082418" o={0.85} w={6} />
      <P d="225,858 300,858 453,858 543,858 571,852 594,709 750,709 800,706 825,696 942,685" c="#3a8a60" o={0.35} w={5} />
      <P d="594,696 750,693 800,693 825,682 942,670" c="#3a8a60" o={0.35} w={5} />
      <P d="198,1014 417,831 429,831 621,810 930,774 954,768" c="#10241c" o={0.9} w={6} />
      <P d="954,189 1005,189" c="#1a0808" w={5} />
      <P d="954,342 1005,342" c="#2a0e0e" w={5} o={0.6} />
      <P d="954,402 1005,402" c="#300838" w={5} />
      <P d="930,890 1017,891" c="#0a2414" w={5} />
      <P d="954,678 1032,678" c="#14241c" w={5} />
      <P d="954,810 1032,807" c="#1c7848" w={4} />
      <Dots p={green} c="#20d820" />
      <Dots p={black} c="#34184c" />
      <Dots p={purple} c="#5a1a5c" dark="#180a1c" />
      <Dots p={navy} c="#2c2c68" dark="#100c24" />
      <Dots p="621,312 891,276 942,264" c="#4c1c54" dark="#2c0c30" o={0.7} />
      <Dots p={teal} c="#58f0b8" />
      <Dots p="225,858 300,858 453,858 543,858 571,852 594,696 660,696 750,693 800,693 825,682 942,670 594,709 750,709 762,709 800,706 825,696 840,696 852,696 942,685" c="#70f0a0" dark="#44a070" o={0.8} />
      <Dots p="198,1014 417,831 429,831 621,810 930,774 954,768" c="#a8dcf0" />
      <Dots p="621,870 621,888 621,900 531,918 198,1075 198,1127" c="#8c9cd0" dark="#5868a0" o={0.8} />
      <Dots p="621,924 930,890 954,904" c="#80d0c8" dark="#4c8c90" o={0.800} />
      <Dots p="930,882" c="#8890d0" dark="#5060a0" />
      <Dots p="1005,189 1005,342" c="#702818" />
      <Dots p="1005,402 954,204" c="#c010c8" />
      <Dots p="1017,384 1017,417 1017,465 1017,891" c="#40d898" />
      <Dots p="1019,492 1020,570 1019,588 1033,840 1033,885 1033,897" c="#2050b0" />
      <Dots p="1032,678 1044,924" c="#c080b0" />
      <Dots p="1032,807" c="#30d850" />
    </g>
  );
}

const yt = (labels, pos) => labels.map((l, i) => [l, pos[i]]);

export default function App() {
  return (
    <div className={'w-[1517px] h-[925px] overflow-hidden bg-[#333333] flex flex-col text-[#c0c0c0] font-["DejaVu_Sans_Condensed","DejaVu_Sans",Tahoma,sans-serif]'}>
      {/* header */}
      <header className="h-[50px] shrink-0 flex border-t border-t-[#484848] border-l border-l-[#1c1c1c] border-r border-r-[#1c1c1c] mr-px">
        <div className="flex gap-px pl-[3px] pt-[5px] w-[291px] shrink-0">
          <ToolButton className="w-[50px]" icon={<FolderIcon />} label="Open" lw={26} />
          <ToolButton className="w-[50px]" icon={<SaveIcon />} label="Save" lw={24} disabled />
          <ToolButton className="w-[75px]" icon={<ManIcon />} label="Authenticate" lw={62} />
          <ToolButton className="w-[47px]" icon={<AboutIcon />} label="About" lw={29} />
          <ToolButton className="w-[47px]" icon={<HelpIcon />} label="Help" lw={22} />
        </div>
        <div className="w-[175px] shrink-0 pl-[3px] flex text-[18px]">
          <div className="flex flex-col gap-[7px] pt-[7px] w-[16px]"><Swatch className="bg-[#6e3c54]" /><Swatch className="bg-[#3c3cac]" /></div>
          <div className="flex flex-col items-center gap-[5px] pt-[5px] w-[20px]"><EyeIcon /><HeartIcon /></div>
          <div className="flex flex-col items-start pl-[6px] pt-[5px] leading-[18.500px]"><Fit w={88}>11,286,871</Fit><Fit w={64}>181,108</Fit></div>
        </div>
        <div className="w-[248px] shrink-0 flex text-[18px]">
          <div className="flex flex-col gap-[7px] pt-[7px] w-[16px]"><Swatch className="bg-[#94641c]" /><Swatch className="bg-[#2c5cc8]" /></div>
          <div className="flex flex-col gap-[4px] pt-[4px] w-[18px]"><CommentsIcon /><CameraIcon /></div>
          <div className="flex flex-col items-start pl-[4px] pt-[4px] leading-[19px]"><Fit w={56}>21,208</Fit><Fit w={46}>2,320</Fit></div>
        </div>
        <div className="w-[216px] shrink-0 flex text-[18px] pl-px">
          <div className="flex flex-col gap-[7px] pt-[7px] w-[16px]"><Swatch className="bg-[#6c7c64]" /><Swatch className="bg-[#5c24ac]" /></div>
          <div className="flex flex-col items-start pl-[2px] pt-[4px] leading-[19px]"><Fit w={192}>1,199,072 group spread</Fit><Fit w={171}>516.84 groups/photo</Fit></div>
        </div>
        <div className="w-[95px] shrink-0 flex flex-col items-end pt-[2px] text-[18px] leading-[21px]"><Fit w={75}>Updated:</Fit><Fit w={54}>Saved:</Fit></div>
        <div className="w-[184px] shrink-0 flex flex-col items-start pl-[8px] pt-[2px] text-[18px] leading-[21px]"><Fit w={98}>10/10/2015</Fit><Fit w={175}>10/10/2015 15:24:26</Fit></div>
        <div className="w-[145px] shrink-0 flex flex-col items-end pt-[2px] text-[18px] leading-[21px]"><Fit w={189}>Tomorrow's Prediction:</Fit><Fit w={84}>Following:</Fit></div>
        <div className="flex flex-col items-start pl-[4px] pt-[2px] text-[18px] leading-[21px]"><Fit w={56}>38,510</Fit><Fit w={56}>41,702</Fit></div>
      </header>
      <div className="h-[3px] shrink-0 bg-[#1a1a1a] mx-[2px]"><div className="w-[33px] h-[2px] mt-px bg-[#2a5c76]" /></div>
      <div className="h-px shrink-0 bg-[#303030]" />
      <div className="h-px shrink-0 bg-[#1e1e1e]" />

      {/* main tabs */}
      <div className="h-[21px] shrink-0 flex items-start pl-[2px] z-10">
        <Tab className="w-[64px] mt-[2px]" label="Dashboard" w={53} />
        <Tab className="w-[62px]" label="Processing" w={52} active />
        <Tab className="w-[71px] mt-[2px]" label="Hall of Fame" w={60} />
        <Tab className="w-[46px] mt-[2px] ml-px" label="Albums" w={35} />
        <Tab className="w-[36px] mt-[2px] ml-[3px]" label="Logs" w={23} />
        <Tab className="w-[49px] mt-[2px] ml-[3px]" label="Options" w={38} />
        <Tab className="w-[44px] mt-[2px]" label="Report" w={34} />
      </div>
      <div className="h-px shrink-0 flex"><div className="w-[66px] bg-[#111]" /><div className="w-[62px] bg-[#363636]" /><div className="flex-1 bg-[#111]" /></div>

      <div className="h-[848px] shrink-0 border-l border-black mr-px border-r border-r-[#111] border-b border-b-[#111]">
        <div className="h-full border border-[#464646] border-b-[#1c1c1c] p-px">
          <div className="h-full border border-[#464646] border-r-[#1c1c1c] mx-px border-b-0 flex flex-col">
            {/* photo toolbar */}
            <div className="flex pl-[2px] pt-px h-[41px] shrink-0">
              <ToolButton className="w-[50px]" icon={<AddIcon />} label="Add" lw={19} />
              <div className="w-[147px] pl-[3px] shrink-0 flex flex-col items-start">
                <Fit w={52} className="text-[11px] leading-[16px] font-bold ml-[-1px]">Photo ID:</Fit>
                <Field className="w-[137px] ml-px mt-[2px]" />
              </div>
              <div className="flex gap-px">
                <ToolButton className="w-[50px]" icon={<UpdateIcon />} label="Update" lw={36} disabled />
                <ToolButton className="w-[50px]" icon={<StopIcon />} label="Stop" lw={23} />
                <ToolButton className="w-[50px]" icon={<ExportIcon />} label="Export" lw={33} />
              </div>
            </div>
            <div className="flex items-center pl-[2px] h-[24px] shrink-0">
              <div className="w-[62px] shrink-0 flex"><Fit w={50} className="text-[11px] leading-[18px] font-bold">Filtering:</Fit></div>
              <Field className="w-[126px] text-[11px] text-[#e4e4e4]"><span className="pl-[2px] flex"><Fit w={11}>ID</Fit></span><DropArrow /></Field>
              <Field className="w-[73px] ml-[6px] text-[11px] text-[#e4e4e4]"><span className="pl-[3px]">=</span><DropArrow /></Field>
              <Field className="w-[229px] ml-[8px]" />
              <div className="w-[34px] h-[25px] ml-[4px] border border-[#1a1a1a]"><div className="h-full border border-[#525252] bg-linear-to-b from-[#3d3d3d] to-[#2d2d2d] flex items-center pl-[5px]"><CheckIcon /></div></div>
              <div className="w-[34px] h-[25px] ml-px border border-[#1a1a1a]"><div className="h-full border border-[#525252] bg-linear-to-b from-[#3d3d3d] to-[#2d2d2d] flex items-center pl-[5px]"><CrossIcon /></div></div>
            </div>
            <div className="pl-[2px] h-[20px] shrink-0 text-[11px] leading-[23px] font-bold flex"><Fit w={213}>Number of items: 2320 (204) selected</Fit></div>

            {/* photo table */}
            <div className="h-[287px] shrink-0 ml-px mr-px border border-[#4a4a4a]"><Table /></div>
            <div className="h-px shrink-0 bg-[#1c1c1c] mt-px mr-[-2px]" />

            {/* lower tabs */}
            <div className="h-[21px] shrink-0 flex items-start pl-px mt-[3px]">
              <Tab className="w-[55px]" label="Statistics" w={44} active />
              <Tab className="w-[84px] mt-[2px] ml-px" label="Flickr Photo List" w={75} />
              <Tab className="w-[118px] mt-[2px] ml-[2px]" label="Flickr Groups Manager" w={107} />
            </div>
            <div className="flex-1 border-t border-[#111] flex">
              <div className="flex-1 border border-b-0 border-[#4a4a4a] mr-[2px] mt-px pl-[4px] pt-px flex">
                <div className="flex flex-col gap-[3px] pt-px">
                  <div className="flex gap-[5px]">
                    <Chart className="w-[373px] h-[218px]" x={10} y={483} w={373} h={218} ox={0} oy={480} title="Total Views" tx={505} ty={68} tw={58}
                      xs={[257, 421, 583, 745, 907, 1073]} ys={yt(['18,000', '16,000', '14,000', '12,000', '10,000', '8,000', '6,000', '4,000', '2,000', '0'], [115, 163, 211, 260, 307, 358, 407, 454, 502, 550])}
                      left={215} right={1113} top={96} bottom={578} ax={210} ay={588} axEnd={1096} ylx={185} labelY={633} lx={[177, 341, 504, 667, 830, 993]} minor={4}><ViewsLines /></Chart>
                    <Chart className="w-[373px] h-[218px]" x={388} y={483} w={373} h={218} ox={385} oy={480} title="Total Likes" tx={490} ty={68} tw={54}
                      xs={[217, 385, 553, 715, 883, 1051]} ys={yt(['1,000', '900', '800', '700', '600', '500', '400', '300', '200', '100', '0'], [107, 154, 200, 244, 292, 338, 385, 431, 476, 523, 569])}
                      left={175} right={1092} top={96} bottom={578} ax={171} ay={588} axEnd={1074} ylx={147} labelY={633} lx={[138, 306, 474, 636, 804, 972]}><LikesLines /></Chart>
                    <Chart className="w-[373px] h-[218px]" x={766} y={483} w={373} h={218} ox={763} oy={480} title="Total Comments" tx={447} ty={68} tw={81}
                      xs={[187, 361, 535, 703, 874, 1048]} ys={yt(['120', '100', '80', '60', '40', '20', '0'], [128, 197, 266, 335, 404, 473, 542])}
                      left={146} right={1092} top={96} bottom={578} ax={141} ay={588} axEnd={1074} ylx={117} labelY={633} lx={[108, 282, 456, 624, 795, 969]} minor={4}><CommentLines /></Chart>
                  </div>
                  <div className="flex gap-[5px]">
                    <Chart className="w-[373px] h-[211px]" x={10} y={704} w={373} h={211} ox={0} oy={700} title="Total Views Histogram" tx={424} ty={71} tw={111}
                      xs={[229, 401, 571, 736, 907, 1076]} ys={yt(['2,000', '1,500', '1,000', '500', '0'], [185, 281, 374, 467, 560])}
                      left={198} right={1113} top={99} bottom={562} ax={192} ay={570} axEnd={1096} ylx={166} labelY={614} lx={[149, 321, 491, 656, 827, 996]} minor={4}>
                      <Spikes list={VIEW_SPIKES} base={562} seed={3} from={241} to={1098} amp={42} /></Chart>
                    <Chart className="w-[373px] h-[211px]" x={388} y={704} w={373} h={211} ox={385} oy={700} title="Total Likes Histogram" tx={408} ty={71} tw={108}
                      xs={[178, 355, 532, 703, 877, 1054]} ys={yt(['400', '350', '300', '250', '200', '150', '100', '50', '0'], [128, 182, 233, 287, 338, 392, 446, 496, 551])}
                      left={146} right={1092} top={99} bottom={560} ax={141} ay={570} axEnd={1074} ylx={117} labelY={614} lx={[99, 276, 453, 625, 797, 975]}>
                      <Spikes list={LIKE_SPIKES} base={552} seed={8} from={190} to={1078} amp={9} /></Chart>
                    <Chart className="w-[373px] h-[211px]" x={766} y={704} w={373} h={211} ox={763} oy={700} title="Total Comments Histogram" tx={367} ty={71} tw={136}
                      xs={[160, 340, 520, 697, 874, 1054]} ys={yt(['30', '25', '20', '15', '10', '5', '0'], [103, 173, 244, 314, 382, 452, 523])}
                      left={128} right={1092} top={99} bottom={560} ax={123} ay={570} axEnd={1074} ylx={99} labelY={614} lx={[81, 261, 441, 618, 795, 975]} minor={4}>
                      <rect x="529" y="523" width="7" height="30" fill="#58a8b0" fillOpacity=".8" />
                      <rect x="766" y="523" width="7" height="15" fill="#143c14" />
                      <rect x="832" y="523" width="7" height="16" fill="#5c4c64" />
                      <rect x="923" y="523" width="7" height="15" fill="#404010" />
                      <Spikes list={COMMENT_SPIKES} base={524} seed={14} from={170} to={1078} amp={20} unit={14} /></Chart>
                  </div>
                </div>
                <Chart className="w-[365px] h-[434px] ml-[4px]" x={1143} y={482} w={365} h={434} ox={1140} oy={480} title="Total Groups" tx={459} ty={92} tw={64}
                  dates={['01/08/2015', '15/08/2015', '01/09/2015', '15/09/2015', '01/10/2015']}
                  xs={[145, 325, 543, 721, 928]} ys={yt(['850', '800', '750', '700', '650', '600', '550', '500', '450', '400', '350', '300', '250'], [167, 247, 326, 407, 485, 563, 644, 722, 803, 881, 959, 1040, 1118])}
                  left={145} right={1071} top={121} bottom={1197} ax={139} ay={1212} axEnd={1053} ylx={114} labelY={1256} lx={[66, 247, 462, 643, 849]} minor={4}><GroupAreas /></Chart>
              </div>
            </div>
          </div>
        </div>
      </div>
    </div>
  );
}
